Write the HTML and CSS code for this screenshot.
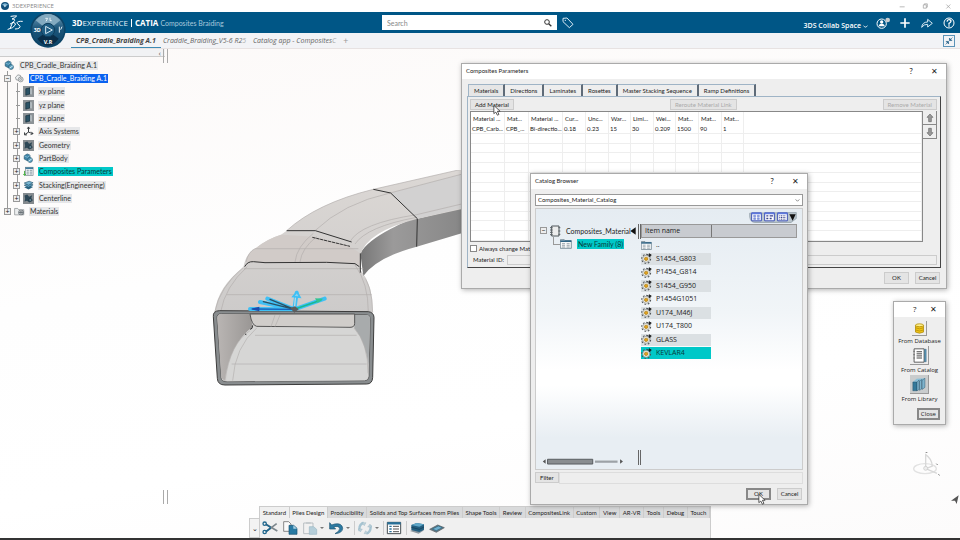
FILE: index.html
```html
<!DOCTYPE html>
<html lang="en">
<head>
    <meta charset="UTF-8">
    <meta name="viewport" content="width=device-width, initial-scale=1.0">
    <title>3DEXPERIENCE</title>
    <link rel="stylesheet" href="styles.css">
</head>
<body>
    <!-- shared icons -->
    <svg class="defs" aria-hidden="true">
        <symbol id="i-plane" viewBox="0 0 36 36">
            <rect width="36" height="36" fill="#8d9397"/>
            <path d="M9 9l14-3v20l-14 4z" fill="#2b5265" stroke="#152c38" stroke-width="2"/>
            <path d="M24 6l4 2v20l-4-2z" fill="#cfd8dd"/>
        </symbol>
        <symbol id="i-part" viewBox="0 0 36 36">
            <path d="M4 9l10-6 9 4v12l-9 6-10-5z" fill="#3f87aa" stroke="#1d4d67" stroke-width="2"/>
            <path d="M4 9l10 5 9-6" fill="none" stroke="#a9d3e6" stroke-width="2"/>
            <circle cx="23" cy="23" r="8" fill="#5fa3c2" stroke="#1d4d67" stroke-width="2"/>
            <path d="M18 27l11-8" stroke="#dceef6" stroke-width="3"/>
        </symbol>
        <symbol id="i-gears" viewBox="0 0 36 36">
            <path d="M5 14l8-8 8 2 2 8-8 8-8-2z" fill="#eef0f1" stroke="#6b7073" stroke-width="2"/>
            <circle cx="22" cy="21" r="8" fill="#e2e5e7" stroke="#6b7073" stroke-width="2"/>
            <circle cx="22" cy="21" r="3" fill="#fff" stroke="#6b7073" stroke-width="2"/>
        </symbol>
        <symbol id="i-geo" viewBox="0 0 36 36">
            <rect width="36" height="36" fill="#858b8f"/>
            <path d="M5 8l9-3 6 7 10-5-3 10 5 7-11 7-8-6-8 3 2-9z" fill="#2d4756"/>
            <circle cx="24" cy="23" r="5" fill="#5d7f90" stroke="#1b2d36" stroke-width="2"/>
        </symbol>
        <symbol id="i-params" viewBox="0 0 36 36">
            <rect x="8" y="4" width="25" height="27" fill="#f2f6f8" stroke="#6d7b84" stroke-width="2"/>
            <path d="M8 7h25" stroke="#2e6f92" stroke-width="5"/>
            <path d="M12 14h7M22 14h8M12 20h7M22 20h8M12 26h7M22 26h8" stroke="#7b8b94" stroke-width="3"/>
            <path d="M5 16v14M1 26l4 5 5-5" fill="none" stroke="#3fae3a" stroke-width="3"/>
        </symbol>
        <symbol id="i-stack" viewBox="0 0 36 36">
            <path d="M4 24l16-6 13 5-15 8z" fill="#2b6482"/>
            <path d="M4 17l16-6 13 5-15 8z" fill="#5a9cbc" stroke="#1e4d66" stroke-width="2"/>
            <path d="M4 10l16-6 13 5-15 8z" fill="#79b5d1" stroke="#1e4d66" stroke-width="2"/>
        </symbol>
        <symbol id="i-axis" viewBox="0 0 36 36">
            <path d="M18 20V4M14 9l4-6 4 6M18 20l14 5M27 19l6 6-8 3M18 20l-12 8M5 21v8h8" fill="none" stroke="#2b2f32" stroke-width="3"/>
        </symbol>
        <symbol id="i-material" viewBox="0 0 36 36">
            <path d="M2 29V8h10l3 4h17v17z" fill="#eceeef" stroke="#777d80" stroke-width="2"/>
            <circle cx="23" cy="21" r="9" fill="#6c7479"/>
            <path d="M17 18q6-5 11 0M17 24q6 5 11 0" fill="none" stroke="#fff" stroke-width="2"/>
        </symbol>
        <symbol id="i-family" viewBox="0 0 36 30">
            <path d="M1 2h12l3 3h18v23H1z" fill="#f5f7f8" stroke="#4d6675" stroke-width="2"/>
            <path d="M1 4h33v5H1z" fill="#2f6484"/>
            <path d="M6 14h9M20 14h9M6 19h9M20 19h9M6 24h9M20 24h9" stroke="#73838d" stroke-width="2"/>
        </symbol>
        <symbol id="i-gear" viewBox="0 0 32 32">
            <circle cx="15" cy="17" r="13" fill="none" stroke="#4d5255" stroke-width="3" stroke-dasharray="5 5"/>
            <circle cx="15" cy="17" r="10" fill="#f7f4e8" stroke="#85898b" stroke-width="2"/>
            <circle cx="15" cy="17" r="5" fill="#e3a31a" stroke="#a0761a" stroke-width="2"/>
            <path d="M19 6h6M24 2l6 4-6 4z" fill="#111" stroke="#111" stroke-width="2"/>
        </symbol>
        <symbol id="i-cursor" viewBox="0 0 20 28">
            <path d="M2 1v21l5-4 4 8 4-2-4-8h7z" fill="#fff" stroke="#333" stroke-width="2"/>
        </symbol>
    </svg>

    <header class="titlebar">
        <svg class="app-icon" viewBox="0 0 24 24">
            <circle cx="12" cy="12" r="12" fill="#12507a"/>
            <path d="M3 8q9-9 18 0l-5 3H8z" fill="#7fb5d3"/>
            <path d="M10 8l6 4-6 4z" fill="#e3f2fa"/>
        </svg>
        <span class="app-name">3DEXPERIENCE</span>
        <svg class="window-controls" viewBox="0 0 180 20">
            <path d="M20 11h15" stroke="#999" stroke-width="2"/>
            <path d="M91 5h9v10h-9zM94 5V2h9v10h-3" fill="none" stroke="#999" stroke-width="2"/>
            <path d="M160 4l12 12M172 4l-12 12" stroke="#999" stroke-width="2"/>
        </svg>
    </header>

    <div class="topbar">
        <svg class="ds-logo" viewBox="0 0 48 48">
            <g fill="none" stroke="#fff" stroke-width="3" stroke-linecap="round" stroke-linejoin="round">
                <path d="M12 4q11-2 17-1-4 5-14 9 9-1 8 4-2 6-13 11"/>
                <path d="M17 22l-7 17M3 43q17-4 22-13 2-6-6-8"/>
                <path d="M46 19q-14-1-16 4 0 3 6 7 6 5 1 9-5 3-12 3"/>
            </g>
        </svg>
        <svg class="compass" viewBox="0 0 108 108">
            <defs>
                <linearGradient id="ball" x1="0" y1="0" x2="0" y2="1">
                    <stop offset="0" stop-color="#719db7"/>
                    <stop offset=".45" stop-color="#1c567b"/>
                    <stop offset="1" stop-color="#0e4366"/>
                </linearGradient>
            </defs>
            <circle cx="54" cy="54" r="53" fill="#0c4467"/>
            <circle cx="54" cy="54" r="48" fill="url(#ball)"/>
            <path d="M17 25q37-38 74 0l-20 16q-17-12-34 0z" fill="#83aac0"/>
            <path d="M22 80q32 42 64 0L70 68q-16 12-32 0z" fill="#0a2e49"/>
            <circle cx="54" cy="54" r="20" fill="#1f5d83" stroke="#0f3e5d" stroke-width="3"/>
            <path d="M47 43l20 11-20 11z" fill="none" stroke="#d6e8f2" stroke-width="3"/>
            <path d="M46 19h7l-5 9M60 17v9h5M88 44v18M96 44l-4 9" stroke="#e4f0f6" stroke-width="3" fill="none"/>
            <text x="11" y="60" class="compass-text">3D</text>
            <text x="41" y="96" class="compass-text">V.R</text>
        </svg>
        <div class="brand"><b>3D</b>EXPERIENCE <i></i> <b>CATIA</b> <span>Composites Braiding</span></div>
        <form class="search">
            <input type="text" placeholder="Search" aria-label="Search">
            <button type="button" aria-label="Run search">
                <svg viewBox="0 0 24 24"><circle cx="9" cy="9" r="7" fill="none" stroke="#333" stroke-width="3"/><path d="M14 14l8 8" stroke="#333" stroke-width="4"/></svg>
            </button>
        </form>
        <button class="icon-btn tag" type="button" aria-label="Tags">
            <svg viewBox="0 0 36 36"><path d="M3 4l12-1 18 19-11 10L3 14z" fill="none" stroke="#d9eaf4" stroke-width="3" stroke-linejoin="round"/><circle cx="10" cy="10" r="2" fill="#d9eaf4"/></svg>
        </button>
        <nav class="top-tools">
            <button class="space" type="button">3DS Collab Space <svg viewBox="0 0 16 10"><path d="M1 2q4 5 7 5t7-5" fill="none" stroke="#fff" stroke-width="3"/></svg></button>
            <button class="icon-btn" type="button" aria-label="Profile">
                <svg viewBox="0 0 42 36"><circle cx="17" cy="20" r="14" fill="none" stroke="#fff" stroke-width="3"/><circle cx="17" cy="15" r="5" fill="#fff"/><path d="M8 28q0-8 9-8t9 8z" fill="#fff"/><circle cx="35" cy="9" r="7" fill="#c8cdd0"/></svg>
            </button>
            <button class="icon-btn" type="button" aria-label="Add">
                <svg viewBox="0 0 42 36"><path d="M21 4v28M7 18h28" stroke="#fff" stroke-width="5"/></svg>
            </button>
            <button class="icon-btn" type="button" aria-label="Share">
                <svg viewBox="0 0 42 36"><path d="M5 31q2-16 18-16V7l14 12-14 11v-8q-11-1-18 9z" fill="none" stroke="#d9eaf4" stroke-width="3"/></svg>
            </button>
            <button class="icon-btn" type="button" aria-label="Help">
                <svg viewBox="0 0 42 36"><circle cx="21" cy="18" r="15" fill="none" stroke="#fff" stroke-width="3"/><path d="M15 14q1-6 6-6 6 0 6 5 0 3-6 6v4M21 25v4" fill="none" stroke="#fff" stroke-width="4"/></svg>
            </button>
        </nav>
    </div>

    <nav class="doc-tabs">
        <a class="active" href="#">CPB_Cradle_Braiding A.1</a>
        <a href="#">Craddle_Braiding_V5-6 R2<span>5</span></a>
        <a href="#">Catalog app - Composites<span>C</span></a>
        <button class="new-tab" type="button" aria-label="New tab">+</button>
        <button class="collapse" type="button" aria-label="Exit full view">
            <svg viewBox="0 0 33 33"><path d="M18 15V7l8 8zM28 5l-6 6M15 18v8l-8-8zM5 28l6-6" fill="#1d5c86" stroke="#1d5c86" stroke-width="2"/></svg>
        </button>
    </nav>

    <main class="workspace">
        <svg class="model" viewBox="0 0 810 690" aria-label="Cradle model">
            <defs>
                <linearGradient id="top" x1="0" y1="0" x2="0" y2="1">
                    <stop offset="0" stop-color="#dcd8d5"/>
                    <stop offset="1" stop-color="#cdcbca"/>
                </linearGradient>
                <linearGradient id="side" x1="0" y1="0" x2="1" y2="0">
                    <stop offset="0" stop-color="#777"/>
                    <stop offset=".3" stop-color="#9b9a9a"/>
                    <stop offset="1" stop-color="#858585"/>
                </linearGradient>
                <linearGradient id="inL" x1="0" y1="0" x2="1" y2="0">
                    <stop offset="0" stop-color="#b9b5b3"/>
                    <stop offset="1" stop-color="#999694"/>
                </linearGradient>
            </defs>
            <path d="M481 250Q500 215 570 178T650 146L810 108V182L650 230Q530 262 490 318z" fill="url(#side)"/>
            <path d="M260 182Q350 100 520 58L810-8V112L650 147Q500 185 481 255L480 300L490 318Q518 345 518 428L44 426Q54 350 130 292Q138 250 165 236Q200 207 243 194z" fill="url(#top)"/>
            <path d="M572 69L810 6V108L652 146z" fill="#d2d1d1"/>
            <path d="M243 194L345 200L450 230L481 250V290L465 278L140 276Q145 245 165 236Q200 207 243 194z" fill="#d1cbc8"/>
            <g fill="none" stroke="#b2aeac" stroke-width="2">
                <path d="M260 182Q350 100 520 58L810-8M345 182Q430 100 570 69L810 6M450 215Q480 160 650 134L810 96M465 222Q500 170 650 142"/>
                <path d="M165 236H475M285 276Q290 230 340 190M300 276Q305 235 350 200M132 296H490M80 374H515"/>
                <path d="M130 292Q60 350 44 426M142 290Q75 350 62 426M465 285Q505 340 505 426M480 300Q518 345 518 428M165 236Q145 245 138 276"/>
            </g>
            <g fill="none" stroke="#333" stroke-width="3">
                <path d="M260 182H346L455 216M520 58L572 69L652 146L650 230M134 290Q142 274 160 275L195 278L380 277L465 281L478 290M481 250V308"/>
                <path d="M337 202L450 229" stroke-dasharray="10 2"/>
            </g>
            <!-- open end of the tube -->
            <path d="M40 440Q38 423 58 422L505 425Q521 427 522 442L518 622Q517 642 500 642L75 645Q53 645 52 625z" fill="#898d8f" stroke="#3c3c3c" stroke-width="3"/>
            <path d="M51 445Q50 431 64 431L500 434Q511 435 511 445L507 618Q506 632 494 632L78 635Q64 635 63 622z" fill="#d4d3d2" stroke="#444" stroke-width="2"/>
            <path d="M52 445Q52 432 64 432H150L158 470Q90 520 74 632L64 624z" fill="url(#inL)"/>
            <path d="M464 435H500Q510 435 510 447L506 585Q495 515 463 475z" fill="#a8abac"/>
            <path d="M150 432H464V460Q464 472 450 472L170 469Q155 466 150 432z" fill="#d0cdca" stroke="#555" stroke-width="3"/>
            <path d="M160 472L462 474Q503 520 505 620L495 631L80 634Q85 530 160 472z" fill="#d6d6d5"/>
            <path d="M150 482Q90 520 75 632M170 474Q105 530 98 632M462 474Q505 520 504 610M95 582L500 582M165 496H470M240 435L225 470M225 435L213 470" fill="none" stroke="#b4b1af" stroke-width="2"/>
            <path d="M135 492l4 2M150 478q8 0 8-12" fill="none" stroke="#333" stroke-width="3"/>
            <!-- fibre direction arrows -->
            <g fill="none" stroke-linecap="round">
                <path d="M283 418L150 417M283 418L180 396M283 418L202 386M283 418L290 368M283 418L374 386" stroke="#3fc0f5" stroke-width="12"/>
                <path d="M283 418L158 417" stroke="#1760b8" stroke-width="4"/>
                <path d="M283 418L190 395M283 418L210 388" stroke="#2c5063" stroke-width="4"/>
                <path d="M283 418L287 375" stroke="#b9d8e4" stroke-width="4"/>
                <path d="M283 418L362 391" stroke="#19b991" stroke-width="5"/>
            </g>
            <path d="M279 380L291 366L300 382z" fill="#8fd2ee" stroke="#3fc0f5" stroke-width="5"/>
            <path d="M345 385l25 1-17 13z" fill="#32c48f"/>
            <path d="M178 410l-27 7 27 7z" fill="#1b4cae"/>
            <path d="M270 414l15-5 11 9-13 10z" fill="#5d5d5d"/>
        </svg>

        <aside class="tree-panel">
            <div class="tree-head">‹</div>
            <ul class="tree">
                <li><svg class="ico"><use href="#i-part"/></svg><span>CPB_Cradle_Braiding A.1</span></li>
                <li class="l1"><button type="button" aria-label="Collapse">−</button><svg class="ico"><use href="#i-gears"/></svg><span class="selected">CPB_Cradle_Braiding A.1</span></li>
                <li class="l2 leaf"><svg class="ico"><use href="#i-plane"/></svg><span>xy plane</span></li>
                <li class="l2 leaf"><svg class="ico"><use href="#i-plane"/></svg><span>yz plane</span></li>
                <li class="l2 leaf"><svg class="ico"><use href="#i-plane"/></svg><span>zx plane</span></li>
                <li class="l2"><button type="button" aria-label="Expand">+</button><svg class="ico"><use href="#i-axis"/></svg><span>Axis Systems</span></li>
                <li class="l2"><button type="button" aria-label="Expand">+</button><svg class="ico"><use href="#i-geo"/></svg><span>Geometry</span></li>
                <li class="l2"><button type="button" aria-label="Expand">+</button><svg class="ico"><use href="#i-part"/></svg><span>PartBody</span></li>
                <li class="l2"><button type="button" aria-label="Expand">+</button><svg class="ico"><use href="#i-params"/></svg><span class="marked">Composites Parameters</span></li>
                <li class="l2"><button type="button" aria-label="Expand">+</button><svg class="ico"><use href="#i-stack"/></svg><span>Stacking(Engineering)</span></li>
                <li class="l2"><button type="button" aria-label="Expand">+</button><svg class="ico"><use href="#i-geo"/></svg><span>Centerline</span></li>
                <li class="l1"><button type="button" aria-label="Expand">+</button><svg class="ico"><use href="#i-material"/></svg><span>Materials</span></li>
            </ul>
        </aside>

        <svg class="triad" viewBox="0 0 84 84">
            <ellipse cx="36" cy="50" rx="34" ry="15" fill="none" stroke="#e2e2e2" stroke-width="4"/>
            <path d="M38 50V8q18 12 20 34zM38 50l34 14" fill="none" stroke="#d8d8d8" stroke-width="4"/>
            <circle cx="38" cy="49" r="6" fill="#eee" stroke="#c5c5c5" stroke-width="2"/>
            <path d="M38 1h5M70 35l4 4M76 67l4 3" stroke="#777" stroke-width="3"/>
        </svg>
        <svg class="corner" viewBox="0 0 24 30"><path d="M0 17L23 1L17 27L12 17z" fill="#555"/></svg>

        <section class="window params" aria-label="Composites Parameters">
            <div class="window-title"><h2>Composites Parameters</h2><button type="button">?</button><button type="button">✕</button></div>
            <div class="params-body">
                <div class="tabs">
                    <button class="on" type="button">Materials</button>
                    <button type="button">Directions</button>
                    <button type="button">Laminates</button>
                    <button type="button">Rosettes</button>
                    <button type="button">Master Stacking Sequence</button>
                    <button type="button">Ramp Definitions</button>
                </div>
                <div class="tab-panel">
                    <div class="panel-actions">
                        <button class="btn" type="button">Add Material<svg class="cursor"><use href="#i-cursor"/></svg></button>
                        <button class="btn reroute" type="button" disabled>Reroute Material Link</button>
                        <button class="btn" type="button" disabled>Remove Material</button>
                    </div>
                    <div class="panel-grid">
                        <table>
                            <colgroup>
                                <col class="w34"><col class="w24"><col class="w34"><col class="w23"><col class="w23"><col class="w22"><col class="w23"><col class="w22"><col class="w23"><col class="w23"><col class="w22"><col>
                            </colgroup>
                            <thead>
                                <tr><th>Material ...</th><th>Mat...</th><th>Material ...</th><th>Cur...</th><th>Unc...</th><th>War...</th><th>Limi...</th><th>Wei...</th><th>Mat...</th><th>Mat...</th><th>Mat...</th><th></th></tr>
                            </thead>
                            <tbody>
                                <tr class="data"><td>CPB_Carb...</td><td>CPB_...</td><td>Bi-directio...</td><td>0.18</td><td>0.23</td><td>15</td><td>30</td><td>0.209</td><td>1500</td><td>90</td><td>1</td><td></td></tr>
                                <tr><td></td><td></td><td></td><td></td><td></td><td></td><td></td><td></td><td></td><td></td><td></td><td></td></tr>
                                <tr><td></td><td></td><td></td><td></td><td></td><td></td><td></td><td></td><td></td><td></td><td></td><td></td></tr>
                                <tr><td></td><td></td><td></td><td></td><td></td><td></td><td></td><td></td><td></td><td></td><td></td><td></td></tr>
                                <tr><td></td><td></td><td></td><td></td><td></td><td></td><td></td><td></td><td></td><td></td><td></td><td></td></tr>
                                <tr><td></td><td></td><td></td><td></td><td></td><td></td><td></td><td></td><td></td><td></td><td></td><td></td></tr>
                                <tr><td></td><td></td><td></td><td></td><td></td><td></td><td></td><td></td><td></td><td></td><td></td><td></td></tr>
                                <tr><td></td><td></td><td></td><td></td><td></td><td></td><td></td><td></td><td></td><td></td><td></td><td></td></tr>
                                <tr><td></td><td></td><td></td><td></td><td></td><td></td><td></td><td></td><td></td><td></td><td></td><td></td></tr>
                                <tr><td></td><td></td><td></td><td></td><td></td><td></td><td></td><td></td><td></td><td></td><td></td><td></td></tr>
                                <tr><td></td><td></td><td></td><td></td><td></td><td></td><td></td><td></td><td></td><td></td><td></td><td></td></tr>
                                <tr><td></td><td></td><td></td><td></td><td></td><td></td><td></td><td></td><td></td><td></td><td></td><td></td></tr>
                            </tbody>
                        </table>
                        <div class="order">
                            <button type="button" aria-label="Move up"><svg viewBox="0 0 24 30"><path d="M12 3l9 10h-5v13H8V13H3z" fill="#9a9a9a" stroke="#666" stroke-width="2"/></svg></button>
                            <button type="button" aria-label="Move down"><svg viewBox="0 0 24 30"><path d="M12 27l9-10h-5V4H8v13H3z" fill="#9a9a9a" stroke="#666" stroke-width="2"/></svg></button>
                        </div>
                    </div>
                    <label class="always"><input type="checkbox">Always change Mat</label>
                    <div class="material-id"><label for="materialId">Material ID:</label><input type="text" id="materialId"></div>
                </div>
                <div class="dialog-buttons"><button class="btn" type="button">OK</button><button class="btn" type="button">Cancel</button></div>
            </div>
        </section>

        <section class="window catalog" aria-label="Catalog Browser">
            <div class="window-title"><h2>Catalog Browser</h2><button type="button">?</button><button type="button">✕</button></div>
            <div class="catalog-body">
                <div class="select-wrap">
                    <select aria-label="Catalog"><option>Composites_Material_Catalog</option></select>
                    <svg viewBox="0 0 12 8"><path d="M1 1l5 5 5-5" fill="none" stroke="#666" stroke-width="2"/></svg>
                </div>
                <div class="browser">
                    <svg class="views" viewBox="0 0 144 38">
                        <path d="M2 6Q0 32 16 34H126L142 22V4z" fill="#b8c4cc" stroke="#8b99a3" stroke-width="2"/>
                        <g fill="#fff" stroke="#3d51b5" stroke-width="3">
                            <path d="M8 5h29v24H8zM47 5h29v24H47zM86 5h29v24H86z"/>
                        </g>
                        <path d="M8 7h29M47 7h29M86 7h29" stroke="#5d78df" stroke-width="5"/>
                        <path d="M14 12h6v5h-6zM25 12h6v5h-6zM14 20h6v5h-6zM25 20h6v5h-6z" fill="#8aa1ea" stroke="#3d51b5"/>
                        <path d="M52 14h6M62 14h10M52 22h6M62 22h6" stroke="#3a438c" stroke-width="4"/>
                        <path d="M91 14h20M91 19h20M91 24h20" stroke="#3a438c" stroke-width="3" stroke-dasharray="3 2"/>
                        <path d="M121 9h19l-9 20z" fill="#111"/>
                    </svg>
                    <div class="browser-cols">
                        <div class="families">
                            <div class="family root"><button type="button" aria-label="Collapse">−</button><svg viewBox="0 0 36 36"><path d="M8 3h22v30H8z" fill="#eceded" stroke="#4e565b" stroke-width="3"/><path d="M3 8h8M3 15h8M3 22h8M3 29h8M28 8h6M28 18h6M28 28h6" stroke="#5b6266" stroke-width="3"/></svg><span>Composites_Material</span></div>
                            <div class="family child"><svg><use href="#i-family"/></svg><span class="marked">New Family (8)</span></div>
                            <svg class="fold" viewBox="0 0 18 24"><path d="M17 1v22L1 12z" fill="#111"/></svg>
                            <svg class="hscroll" viewBox="0 0 260 22">
                                <path d="M11 4v14L2 11zM245 4v14l9-7z" fill="#555"/>
                                <path d="M17 4h142v15H17z" fill="#898d90" stroke="#55595c" stroke-width="3"/>
                                <path d="M166 8h71v7h-71z" fill="#9da2a6"/>
                            </svg>
                        </div>
                        <div class="splitter"></div>
                        <div class="items">
                            <div class="item-head"><span>Item name</span><span></span></div>
                            <ul>
                                <li><svg><use href="#i-family"/></svg>..</li>
                                <li><svg><use href="#i-gear"/></svg>S1454_G803</li>
                                <li><svg><use href="#i-gear"/></svg>P1454_G814</li>
                                <li><svg><use href="#i-gear"/></svg>S1454_G950</li>
                                <li><svg><use href="#i-gear"/></svg>P1454G1051</li>
                                <li><svg><use href="#i-gear"/></svg>U174_M46J</li>
                                <li><svg><use href="#i-gear"/></svg>U174_T800</li>
                                <li><svg><use href="#i-gear"/></svg>GLASS</li>
                                <li class="marked"><svg><use href="#i-gear"/></svg>KEVLAR4</li>
                            </ul>
                        </div>
                    </div>
                </div>
                <div class="filter"><button class="btn" type="button">Filter</button><input type="text" aria-label="Filter"></div>
                <div class="dialog-buttons"><button class="btn default" type="button">OK<svg class="cursor"><use href="#i-cursor"/></svg></button><button class="btn" type="button">Cancel</button></div>
            </div>
        </section>

        <section class="window source" aria-label="Add material from">
            <div class="window-title"><h2></h2><button type="button">?</button><button type="button">✕</button></div>
            <div class="source-body">
                <button class="src small" type="button" aria-labelledby="s1"><svg viewBox="0 0 36 36"><path d="M7 9v19q11 6 22 0V9z" fill="#efc41a" stroke="#a98300" stroke-width="2"/><ellipse cx="18" cy="9" rx="11" ry="4" fill="#fff08a" stroke="#a98300" stroke-width="2"/><path d="M7 16q11 6 22 0M7 22q11 6 22 0" fill="none" stroke="#b38c00" stroke-width="2"/></svg></button>
                <span id="s1">From Database</span>
                <button class="src" type="button" aria-labelledby="s2"><svg viewBox="0 0 36 36"><path d="M5 2h24v32H5z" fill="#fff" stroke="#444" stroke-width="2"/><path d="M30 3h4v30h-4z" fill="#5b9abb" stroke="#24506a"/><path d="M11 9h13M11 14h13M11 19h13M11 24h13" stroke="#222" stroke-width="2"/><path d="M3 8h4M3 16h4M3 24h4" stroke="#666" stroke-width="2"/></svg></button>
                <span id="s2">From Catalog</span>
                <button class="src pressed" type="button" aria-labelledby="s3"><svg viewBox="0 0 36 36"><path d="M2 12l9-8 21-1-9 8z" fill="#8cc0d9"/><g stroke="#1d4860"><path d="M2 12h10v21H2z" fill="#34799a"/><path d="M12 12l5-5v23l-5 3zM18 10l5-4v23l-5 3zM24 8l7-5v22l-7 5z" fill="#7fb4cd"/></g></svg></button>
                <span id="s3">From Library</span>
                <button class="btn default close" type="button">Close</button>
            </div>
        </section>

        <div class="action-bar">
            <button class="grip" type="button" aria-label="Action bar menu">⌄</button>
            <div class="action-main">
                <div class="action-tabs">
                    <button type="button">Standard</button><button class="on" type="button">Plies Design</button><button type="button">Producibility</button><button type="button">Solids and Top Surfaces from Plies</button><button type="button">Shape Tools</button><button type="button">Review</button><button type="button">CompositesLink</button><button type="button">Custom</button><button type="button">View</button><button type="button">AR-VR</button><button type="button">Tools</button><button type="button">Debug</button><button type="button">Touch</button>
                </div>
                <div class="action-tools">
                    <button type="button" aria-label="Cut"><svg viewBox="0 0 48 42"><path d="M12 10l34 20M12 32L44 8" stroke="#7d878d" stroke-width="5"/><path d="M12 10l14 9M12 32l14-11" stroke="#1f668c" stroke-width="5"/><circle cx="8" cy="8" r="5" fill="none" stroke="#1f668c" stroke-width="4"/><circle cx="8" cy="33" r="5" fill="none" stroke="#1f668c" stroke-width="4"/></svg></button>
                    <button type="button" aria-label="Copy"><svg viewBox="0 0 48 42"><path d="M5 2h15l7 7v22H5z" fill="#fafafa" stroke="#555" stroke-width="2"/><path d="M21 13h14l10 9v18H21z" fill="#287aa3" stroke="#1a526f" stroke-width="2"/><path d="M34 13l11 10H34z" fill="#a9d0e2"/></svg></button>
                    <button class="drop" type="button" aria-label="Paste"><svg viewBox="0 0 48 42"><path d="M5 6h28v32H5z" fill="#f1f1f1" stroke="#b9bfc3" stroke-width="3"/><path d="M12 3h14v6H12z" fill="#c6cbce"/><path d="M22 17h13l9 8v15H22z" fill="#b5ced9" stroke="#9cb8c4" stroke-width="2"/></svg></button>
                    <button class="drop" type="button" aria-label="Undo"><svg viewBox="0 0 48 42"><path d="M5 5v19h18l-6-6q15-5 18 4 1 9-14 16 22-1 23-16-2-17-24-13l-9 3z" fill="#2d7aa2" stroke="#1a526f" stroke-width="2"/></svg></button>
                    <button class="drop split" type="button" aria-label="Update"><svg viewBox="0 0 48 42"><path d="M20 5Q4 12 8 30M28 38q16-7 12-25" fill="none" stroke="#a6c4d2" stroke-width="7"/><path d="M14 5h13l-5 9zM34 38H21l5-9zM4 24h12l-6 9zM32 18h12l-5-9z" fill="#bdd1da" stroke="#90aebb"/></svg></button>
                    <button class="split" type="button" aria-label="Composites parameters"><svg viewBox="0 0 48 42"><path d="M4 4h40v34H4z" fill="#fff" stroke="#444c51" stroke-width="3"/><path d="M4 7h40" stroke="#287099" stroke-width="7"/><path d="M10 16h7M10 24h7M10 32h7" stroke="#287099" stroke-width="4"/><path d="M21 16h18M21 24h18M21 32h18" stroke="#555" stroke-width="3"/></svg></button>
                    <button class="split" type="button" aria-label="Plies group"><svg viewBox="0 0 48 42"><path d="M3 30l18-8 24 6-16 10z" fill="#8d989f"/><path d="M7 12l16-6 22 4v16l-14 7-24-6z" fill="#235f80"/><path d="M7 12l16-6 22 4-14 7z" fill="#5fa7c8"/><path d="M7 19l24 6 14-7" fill="none" stroke="#0f3a52" stroke-width="2"/></svg></button>
                    <button type="button" aria-label="Ply"><svg viewBox="0 0 48 42"><path d="M2 25l24-13 20 8-24 14z" fill="#6b7981" stroke="#4d5960" stroke-width="2"/><path d="M10 24l18-9 12 5-18 9z" fill="#6fb0cf" stroke="#28637f" stroke-width="2"/></svg></button>
                </div>
            </div>
        </div>
    </main>
</body>
</html>
```

FILE: styles.css
```css
* {
    box-sizing: border-box;
}
body {
    margin: 0;
    min-height: 100vh;
    display: flex;
    flex-direction: column;
    font-family: "Open Sans", "Noto Sans", sans-serif;
    font-size: 6px;
    line-height: 10px;
    color: #222;
    background: #fff;
    overflow: hidden;
}
button, input, select {
    font: inherit;
    color: inherit;
    margin: 0;
    padding: 0;
    border: 0;
    border-radius: 0;
    background: none;
}
h2, ul {
    margin: 0;
    padding: 0;
    font-size: inherit;
    font-weight: normal;
    list-style: none;
}
svg {
    display: block;
    flex: none;
}
.defs {
    position: absolute;
    width: 0;
    height: 0;
}

/* application frame */
.titlebar {
    display: flex;
    align-items: center;
    height: 12px;
    padding: 0 7px 0 1px;
    background: #fff;
}
.app-icon {
    width: 8px;
    height: 8px;
}
.app-name {
    margin-left: 3px;
    font-size: 6px;
    color: #888;
}
.window-controls {
    width: 60px;
    height: 7px;
    margin-left: auto;
}
.topbar {
    position: relative;
    display: flex;
    align-items: center;
    height: 21px;
    padding: 0 4px 0 7px;
    background: #005686;
    color: #fff;
}
.ds-logo {
    width: 16px;
    height: 16px;
}
.compass {
    position: absolute;
    left: 30px;
    top: 0;
    width: 36px;
    height: 36px;
    z-index: 2;
}
.compass-text {
    font-size: 16px;
    font-weight: bold;
    fill: #fff;
}
.brand {
    display: flex;
    align-items: center;
    width: 310px;
    margin-left: 49px;
    font-size: 8px;
    white-space: nowrap;
    color: #e6eff5;
}
.brand b {
    color: #fff;
}
.brand i {
    width: 1px;
    height: 8px;
    margin: 0 3px;
    background: #fff;
}
.brand span {
    margin-left: 2px;
    font-family: Lato, sans-serif;
    font-size: 7px;
    color: #a9c9dc;
}
.search {
    display: flex;
    align-items: center;
    width: 175px;
    height: 15px;
    padding: 0 5px;
    background: #fff;
}
.search input {
    flex: 1;
    min-width: 0;
    font-family: Lato, sans-serif;
    font-size: 7px;
    outline: none;
}
.search input::placeholder {
    color: #888;
}
.search svg {
    width: 8px;
    height: 8px;
}
.icon-btn svg {
    width: 14px;
    height: 12px;
}
.tag {
    margin-left: 4px;
}
.top-tools {
    display: flex;
    align-items: center;
    gap: 8px;
    margin-left: auto;
}
.space {
    display: flex;
    align-items: center;
    gap: 2px;
    padding-top: 7px;
    font-size: 7px;
    font-weight: 600;
}
.space svg {
    width: 5px;
    height: 3px;
}
.doc-tabs {
    display: flex;
    align-items: stretch;
    height: 16px;
    padding: 0 5px 0 71px;
    border-bottom: 1px solid #e7e2e2;
    background: #f2f3f6;
    font-size: 7px;
    line-height: 15px;
    font-style: italic;
}
.doc-tabs a {
    width: 90px;
    padding-left: 2px;
    overflow: hidden;
    white-space: nowrap;
    text-decoration: none;
    color: #666;
}
.doc-tabs a span {
    color: #aaa;
}
.doc-tabs .active {
    padding-left: 5px;
    border-bottom: 1px solid #3d8ab3;
    font-weight: bold;
    color: #444;
}
.new-tab {
    margin-left: 2px;
    font-size: 9px;
    color: #999;
}
.collapse {
    align-self: center;
    width: 12px;
    height: 12px;
    margin-left: auto;
    border: 1px solid #5b93b8;
}
.collapse svg {
    width: 10px;
    height: 10px;
}
.workspace {
    position: relative;
    flex: 1;
    display: flex;
    flex-direction: column;
    border-bottom: 2px solid #333;
    background: linear-gradient(170deg, #fcf9f8, #fefefe 40%, #fff 70%, #fcfbfb);
}
.model {
    position: absolute;
    left: 200px;
    top: 121px;
    width: 270px;
    height: 230px;
}

/* specification tree */
.tree-panel {
    position: relative;
    flex: 1;
    width: 168px;
}
.tree-panel::before, .tree-panel::after {
    content: "";
    position: absolute;
    right: 0;
    top: 0;
    width: 3px;
    height: 14px;
    border: solid #aaa;
    border-width: 0 1px;
}
.tree-panel::after {
    top: auto;
    bottom: 2px;
}
.tree-head {
    height: 8px;
    margin-right: 3px;
    padding-right: 4px;
    border-bottom: 1px solid #ccc;
    background: #f1f2f4;
    font-size: 8px;
    line-height: 7px;
    text-align: right;
    color: #666;
}
.tree {
    position: relative;
    display: flex;
    flex-direction: column;
    justify-content: space-between;
    height: 159px;
    margin-top: 2px;
    padding-left: 4px;
    font-family: Lato, sans-serif;
    font-size: 7px;
}
.tree::before, .tree::after {
    content: "";
    position: absolute;
    left: 7px;
    top: 12px;
    bottom: 8px;
    width: 1px;
    background: #999;
}
.tree::after {
    left: 17px;
    top: 24px;
    bottom: 20px;
}
.tree li {
    position: relative;
    z-index: 1;
    display: flex;
    align-items: center;
    height: 12px;
}
.tree li .ico {
    width: 11px;
    height: 11px;
}
.tree li span {
    margin-left: 4px;
    padding: 0 1px;
    line-height: 9px;
    background: #e6e7e9;
    color: #333;
}
.tree .l1 .ico {
    margin-left: 3px;
}
.tree .l2 {
    padding-left: 9px;
}
.tree .l2 .ico {
    margin-left: 3px;
}
.tree .leaf::before {
    content: "";
    width: 7px;
    height: 1px;
    background: linear-gradient(90deg, transparent 50%, #999 50%);
}
.tree button, .family button {
    width: 7px;
    height: 7px;
    border: 1px solid #999;
    background: #eee;
    font-size: 7px;
    line-height: 5px;
}
.tree li .selected {
    background: #0a62f0;
    color: #fff;
}
.tree li .marked, .marked {
    background: #00c8c8;
    color: #063a3a;
}
.triad {
    position: absolute;
    right: 19px;
    bottom: 58px;
    width: 28px;
    height: 28px;
}
.corner {
    position: absolute;
    right: 1px;
    bottom: 33px;
    width: 8px;
    height: 10px;
}

/* windows */
.window {
    position: absolute;
    border: 1px solid #aaa;
    background: #eee;
    box-shadow: 1px 1px 5px rgba(0, 0, 0, 0.3);
    font-family: Lato, "Open Sans", sans-serif;
}
.window-title {
    display: flex;
    align-items: center;
    height: 15px;
    padding: 0 8px 2px 4px;
    background: #fff;
}
.window-title h2 {
    flex: 1;
}
.window-title button {
    width: 8px;
    margin-left: 15px;
    font-size: 8px;
}
.btn {
    position: relative;
    height: 11px;
    padding: 0 4px;
    border: 1px solid #ccc;
    background: #e4e4e4;
    line-height: 9px;
    white-space: nowrap;
}
.btn:disabled {
    color: #aaa;
}
.btn.default {
    border: 2px solid #888;
    line-height: 7px;
}
.cursor {
    position: absolute;
    left: 22px;
    top: 5px;
    width: 8px;
    height: 11px;
}
.default .cursor {
    left: 10px;
    top: 4px;
}
.dialog-buttons {
    display: flex;
    justify-content: flex-end;
    gap: 6px;
    padding-right: 1px;
}
.dialog-buttons .btn {
    width: 25px;
    height: 12px;
    padding: 0;
    line-height: 8px;
    text-align: center;
}
.params {
    left: 461px;
    top: 14px;
    width: 486px;
}
.params-body {
    padding: 5px 5px 4px;
}
.tabs {
    display: flex;
    height: 12px;
    padding-left: 1px;
}
.tabs button {
    padding: 0 5px;
    border-top: 1px solid #9fb4c6;
    border-right: 2px solid #5f6b78;
    white-space: nowrap;
}
.tabs .on {
    border-left: 1px solid #9fb4c6;
    background: #e6e6e6;
}
.tab-panel {
    height: 172px;
    padding: 2px 3px 0 2px;
    border: 1px solid #9fb4c6;
    border-right: 1px solid #444;
    border-bottom: 1px solid #444;
}
.panel-actions {
    display: flex;
    margin-bottom: 1px;
}
.reroute {
    margin: 0 auto 0 156px;
}
.panel-grid {
    display: flex;
}
.panel-grid table {
    flex: 1;
    width: 0;
    height: 131px;
    border: 1px solid #888;
    border-collapse: separate;
    border-spacing: 0;
    table-layout: fixed;
    background: #fff;
}
th, td {
    padding: 0 0 0 1px;
    border-right: 1px solid #eee;
    border-bottom: 1px solid #eee;
    font-weight: normal;
    line-height: 9px;
    text-align: left;
    white-space: nowrap;
    overflow: hidden;
}
th {
    height: 12px;
    padding-left: 2px;
    border-bottom: 0;
}
.data td {
    height: 10px;
}
.w34 {
    width: 34px;
}
.w24 {
    width: 24px;
}
.w23 {
    width: 23px;
}
.w22 {
    width: 22px;
}
.order {
    width: 14px;
}
.order button {
    display: flex;
    align-items: center;
    justify-content: center;
    width: 14px;
    height: 14px;
    border: solid #888;
    border-width: 0 1px 1px 0;
}
.order svg {
    width: 8px;
    height: 10px;
}
.always {
    display: flex;
    align-items: center;
    gap: 2px;
    height: 9px;
    margin-top: 2px;
}
.always input {
    appearance: none;
    width: 7px;
    height: 7px;
    border: 1px solid #888;
    background: #fff;
}
.material-id {
    display: flex;
    gap: 3px;
    margin-top: 2px;
    padding-left: 3px;
}
.material-id input {
    flex: 1;
    height: 10px;
    border: 1px solid #ccc;
}
.params .dialog-buttons {
    margin-top: 4px;
}
.catalog {
    left: 530px;
    top: 124px;
    width: 278px;
}
.catalog-body {
    padding: 5px 4px 4px;
}
.select-wrap {
    position: relative;
}
.select-wrap select {
    appearance: none;
    display: block;
    width: 100%;
    height: 12px;
    padding-left: 2px;
    border: 1px solid #999;
    background: #fff;
}
.select-wrap svg {
    position: absolute;
    right: 3px;
    top: 5px;
    width: 5px;
    height: 3px;
}
.browser {
    height: 262px;
    margin-top: 2px;
    padding: 2px 5px 2px 4px;
    border: 1px solid #ccc;
    background: linear-gradient(#e5ecf2, #f1f5f8 40%, #fff 62%, #fff 68%, #e8eef3 88%);
}
.views {
    width: 48px;
    height: 13px;
    margin-left: auto;
}
.browser-cols {
    display: flex;
    height: 241px;
}
.families {
    position: relative;
    display: flex;
    flex-direction: column;
    width: 98px;
    overflow: hidden;
    font-size: 7px;
}
.family {
    display: flex;
    align-items: center;
    height: 13px;
    white-space: nowrap;
}
.family svg {
    width: 12px;
    height: 12px;
}
.root svg {
    margin: 0 5px 0 2px;
}
.child {
    padding-left: 19px;
}
.child::before {
    content: "";
    width: 6px;
    height: 7px;
    margin: -6px 0 0 -6px;
    border: solid #999;
    border-width: 0 0 1px 1px;
}
.child span {
    margin-left: 5px;
    padding: 0 1px;
}
.fold {
    position: absolute;
    right: 2px;
    top: 3px;
    width: 6px;
    height: 8px;
}
.hscroll {
    width: 87px;
    height: 7px;
    margin: auto 0 0;
}
.splitter {
    width: 3px;
    background:
        linear-gradient(#666, #666) 0 0 / 1px 15px no-repeat,
        linear-gradient(#666, #666) 2px 0 / 1px 15px no-repeat,
        linear-gradient(#666, #666) 0 100% / 1px 15px no-repeat,
        linear-gradient(#666, #666) 2px 100% / 1px 15px no-repeat;
}
.items {
    flex: 1;
    font-family: "Open Sans", "Noto Sans", sans-serif;
    font-size: 7px;
}
.item-head {
    display: flex;
    height: 14px;
    border: 1px solid #999;
    background: #c8cbd0;
    line-height: 12px;
}
.item-head span {
    flex: 1;
}
.item-head span:first-child {
    flex: 0 0 70px;
    padding-left: 3px;
    border-right: 1px solid #777;
}
.items ul {
    display: flex;
    flex-direction: column;
    justify-content: space-between;
    width: 70px;
    height: 120px;
    margin-top: 1px;
}
.items li {
    display: flex;
    align-items: center;
    gap: 4px;
    height: 12px;
}
.items li:nth-child(even) {
    background: #dbe0e3;
}
.items li svg {
    width: 11px;
    height: 11px;
}
.items li.marked {
    background: #00c8c8;
}
.filter {
    display: flex;
    height: 12px;
    margin: 2px 0 4px;
}
.filter input {
    flex: 1;
    height: 12px;
    border: 1px solid #ddd;
}
.source {
    right: 14px;
    top: 252px;
    width: 53px;
    font-family: "Open Sans", "Noto Sans", sans-serif;
}
.source .window-title button:last-child {
    margin-left: 14px;
}
.source-body {
    display: flex;
    flex-direction: column;
    align-items: center;
    padding: 4px 5px;
    white-space: nowrap;
}
.src {
    display: flex;
    align-items: center;
    justify-content: center;
    width: 19px;
    height: 19px;
    border: solid #999;
    border-width: 0 1px 1px 0;
}
.src svg {
    width: 15px;
    height: 15px;
}
.pressed {
    background: #c9cccd;
}
.small {
    width: 15px;
    height: 15px;
}
.small svg {
    width: 13px;
    height: 13px;
}
.close {
    align-self: flex-end;
    height: 12px;
    margin-top: 4px;
    padding: 0 2px;
}

/* action bar */
.action-bar {
    display: flex;
    align-items: flex-end;
    justify-content: center;
    font-family: Lato, "Open Sans", sans-serif;
}
.grip {
    width: 10px;
    height: 20px;
    border: 1px solid #ccc;
    border-right: 0;
    background: #f3f3f3;
    font-size: 7px;
    line-height: 4px;
}
.action-main {
    width: 452px;
    border: 1px solid #ccc;
    border-bottom: 0;
    background: #f0f0f0;
}
.action-tabs {
    display: flex;
    height: 11px;
}
.action-tabs button {
    flex: 1 1 auto;
    border-right: 1px solid #ccc;
    background: #d9dadb;
    white-space: nowrap;
}
.action-tabs .on, .action-tabs button:first-child {
    background: #f0f0f0;
}
.action-tools {
    display: flex;
    align-items: center;
    gap: 4px;
    height: 20px;
    padding-left: 2px;
}
.action-tools svg {
    width: 16px;
    height: 14px;
}
.drop {
    display: flex;
    align-items: center;
    gap: 2px;
}
.drop::after {
    content: "";
    border: 2px solid transparent;
    border-top-color: #777;
    border-bottom: 0;
}
.split {
    padding-left: 2px;
    border-left: 1px solid #ccc;
}
```
